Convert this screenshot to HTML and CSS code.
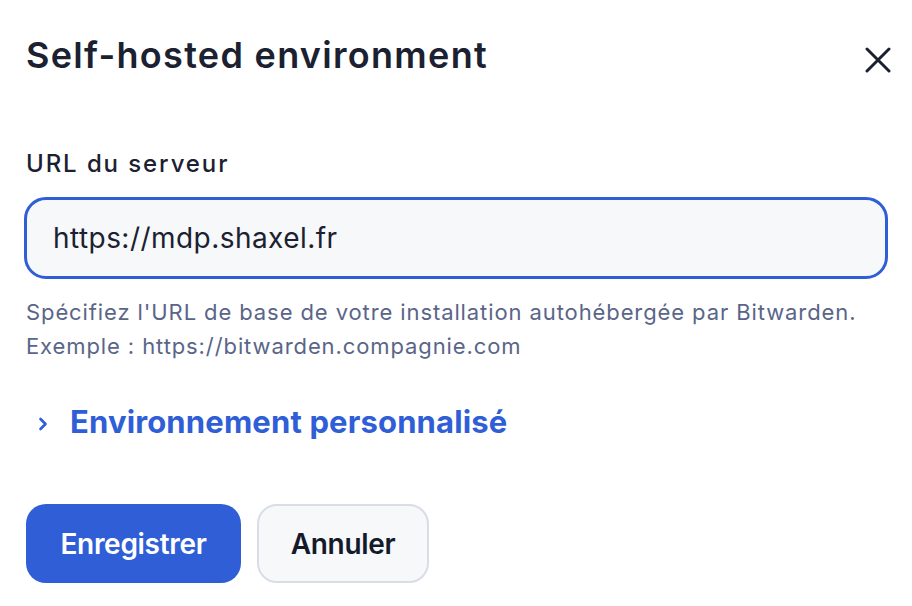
FILE: index.html
```html
<!DOCTYPE html>
<html lang="fr">
<head>
<meta charset="utf-8">
<title>Self-hosted environment</title>
<link rel="stylesheet" href="styles.css">
</head>
<body>
<div class="dialog">
  <header class="dialog-header">
    <h1 class="dialog-title">Self-hosted environment</h1>
    <button class="close-btn" aria-label="Fermer">
      <svg width="26" height="26" viewBox="0 0 26 26" fill="none" stroke="#1b2130" stroke-width="3" stroke-linecap="round"><path d="M2 2 L24 24 M24 2 L2 24"/></svg>
    </button>
  </header>
  <div class="field">
    <label class="field-label" for="url">URL du serveur</label>
    <div class="input-box"><span class="input-value">https://mdp.shaxel.fr</span></div>
    <p class="hint">Spécifiez l'URL de base de votre installation autohébergée par Bitwarden.<br>Exemple : https://bitwarden.compagnie.com</p>
  </div>
  <div class="disclosure">
    <svg class="chevron" width="10" height="14" viewBox="0 0 10 14" fill="none" stroke="#2f5ed6" stroke-width="2.6" stroke-linecap="round" stroke-linejoin="round"><path d="M2.5 2 L7.5 7 L2.5 12"/></svg>
    <span class="disclosure-text">Environnement personnalisé</span>
  </div>
  <div class="actions">
    <button class="btn btn-primary">Enregistrer</button>
    <button class="btn btn-secondary">Annuler</button>
  </div>
</div>
</body>
</html>
```
FILE: styles.css
```css
html, body {
  margin: 0;
  padding: 0;
  background: #ffffff;
}
body {
  font-family: Inter, "Noto Sans", sans-serif;
  color: #1b2130;
}
.dialog {
  padding: 34px 21px 0 26px;
  display: flex;
  flex-direction: column;
}
.dialog-header {
  display: flex;
  align-items: flex-start;
  justify-content: space-between;
  height: 43px;
}
.dialog-title {
  margin: 0;
  font-size: 36px;
  font-weight: 600;
  line-height: 43px;
  letter-spacing: 1.3px;
  color: #1b2130;
}
.close-btn {
  border: 0;
  background: none;
  padding: 0;
  margin-top: 13px;
  width: 26px;
  height: 26px;
  display: flex;
}
.field {
  margin-top: 72px;
  display: flex;
  flex-direction: column;
}
.field-label {
  font-size: 24px;
  font-weight: 500;
  line-height: 29px;
  letter-spacing: 1.9px;
  color: #1b2130;
}
.input-box {
  margin-top: 19px;
  margin-left: -2px;
  margin-right: 3px;
  height: 82px;
  box-sizing: border-box;
  border: 3px solid #2f5ed6;
  border-radius: 22px;
  background: #f6f8fa;
  display: flex;
  align-items: center;
  padding-left: 26px;
}
.input-value {
  font-size: 28px;
  letter-spacing: 0.45px;
  color: #1b2130;
}
.hint {
  margin: 16px 0 0;
  font-size: 22px;
  line-height: 34px;
  letter-spacing: 0.9px;
  color: #5a6588;
}
.disclosure {
  margin-top: 41px;
  display: flex;
  align-items: center;
  gap: 22px;
  padding-left: 12px;
  height: 36px;
}
.chevron {
  margin-top: 4px;
}
.disclosure-text {
  font-size: 31px;
  font-weight: 700;
  line-height: 36px;
  letter-spacing: 0.15px;
  color: #2f5ed6;
}
.actions {
  margin-top: 64px;
  display: flex;
  gap: 16px;
}
.btn {
  font-family: Inter, "Noto Sans", sans-serif;
  font-size: 28px;
  font-weight: 600;
  letter-spacing: -0.3px;
  height: 79px;
  border-radius: 20px;
  padding: 0;
  box-sizing: border-box;
  text-align: center;
}
.btn-primary {
  width: 215px;
  background: #2f5ed6;
  color: #ffffff;
  border: 0;
}
.btn-secondary {
  width: 172px;
  background: #f6f8fa;
  color: #141a2a;
  border: 2px solid #d8dde6;
}
```
